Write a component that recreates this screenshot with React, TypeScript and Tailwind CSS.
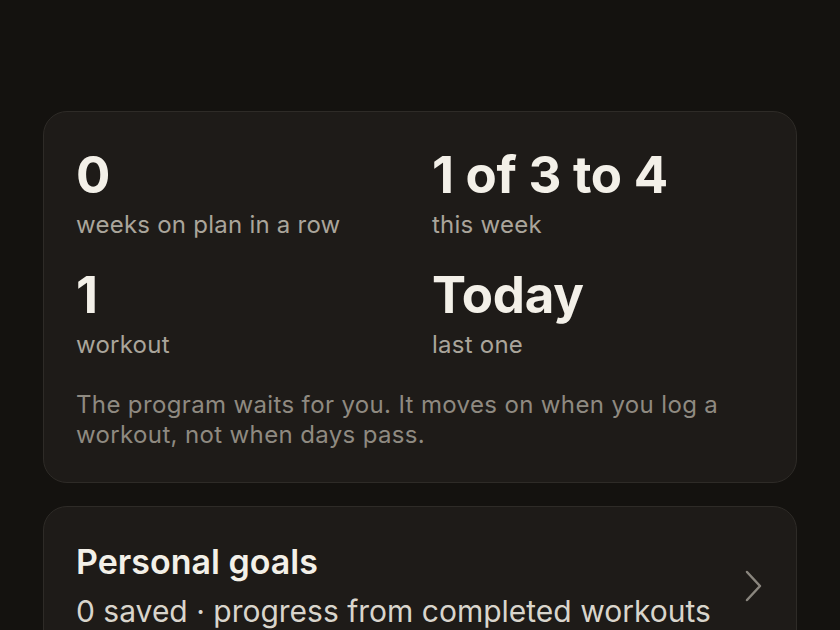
const stats = [
  { value: "0", label: "weeks on plan in a row" },
  { value: "1 of 3 to 4", label: "this week" },
  { value: "1", label: "workout" },
  { value: "Today", label: "last one" },
];

export default function App() {
  return (
    <div
      className="min-h-[630px] bg-[#14120f] pt-[111px] px-[43px] flex flex-col gap-[23px]"
      style={{ fontFamily: "Inter, 'Noto Sans', sans-serif" }}
    >
      {/* progress summary */}
      <section className="rounded-[24px] border border-[#2e2b27] bg-[#1e1b18] px-[32px] pt-[37px] pb-[32px]">
        <div className="grid grid-cols-2 gap-x-6 gap-y-[29px]">
          {stats.map((s) => (
            <div key={s.label}>
              <p className="text-[51px] leading-[52px] font-bold tracking-[-0.005em] text-[#f3f0e8]">{s.value}</p>
              <p className="mt-[9px] text-[24px] leading-[30px] tracking-[0.01em] text-[#aaa59b]">{s.label}</p>
            </div>
          ))}
        </div>
        <p className="mt-[30px] text-[24px] leading-[30px] tracking-[0.015em] text-[#8f8a81]">
          The program waits for you. It moves on when you log a workout, not when days pass.
        </p>
      </section>

      {/* goals link */}
      <section className="rounded-[24px] border border-[#2e2b27] bg-[#1e1b18] pl-[32px] pr-[32px] pt-[35px] pb-[30px] flex items-start justify-between">
        <div>
          <p className="text-[34px] leading-[40px] font-semibold text-[#f3f0e8]">Personal goals</p>
          <p className="mt-[11px] text-[30px] leading-[36px] text-[#d9d5cc]">0 saved · progress from completed workouts</p>
        </div>
        <svg width="20" height="32" viewBox="0 0 20 32" className="mt-[28px] shrink-0 text-[#8a867e]">
          <polyline
            points="3,2 16,16 3,30"
            fill="none"
            stroke="currentColor"
            strokeWidth="2.5"
            strokeLinecap="round"
            strokeLinejoin="round"
          />
        </svg>
      </section>
    </div>
  );
}
